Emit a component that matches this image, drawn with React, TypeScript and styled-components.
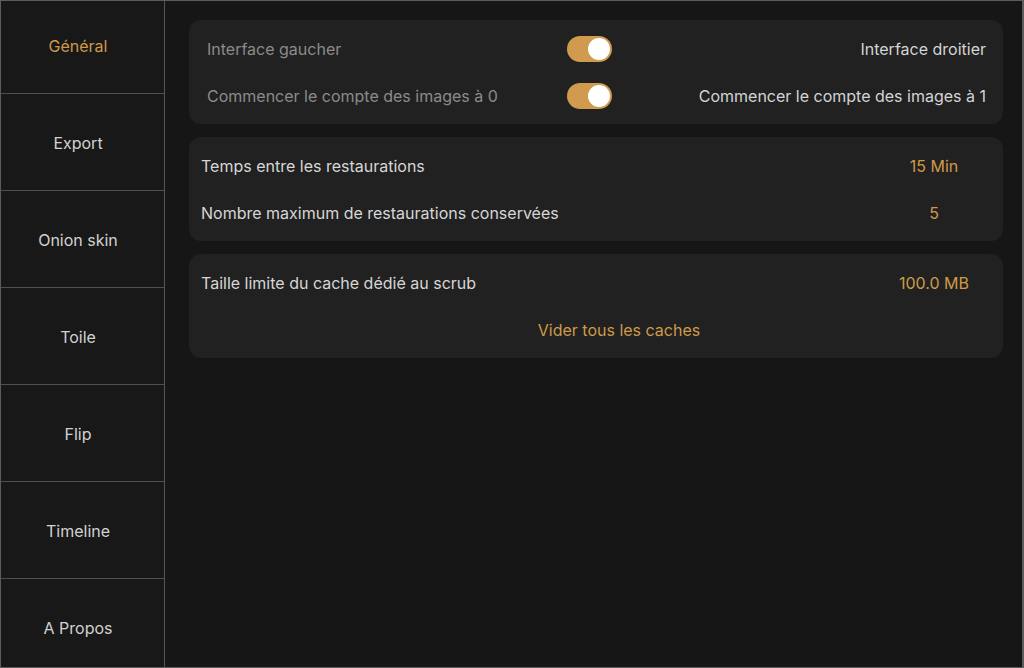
import React from "react";
import styled, { createGlobalStyle } from "styled-components";

const Global = createGlobalStyle`
  html, body { margin: 0; padding: 0; background: #161616; }
  body { font-family: Inter, "Noto Sans", "Liberation Sans", sans-serif; -webkit-font-smoothing: antialiased; }
  * { box-sizing: border-box; }
`;

const Frame = styled.div`
  width: 1024px;
  height: 668px;
  display: flex;
  border: 1px solid #5c5c5c;
  border-right-width: 2px;
  background: #161616;
  overflow: hidden;
`;

const Sidebar = styled.nav`
  width: 164px;
  flex-shrink: 0;
  background: #181818;
  border-right: 1px solid #555;
  overflow: hidden;
`;

const NavList = styled.div`
  display: flex;
  flex-direction: column;
  margin-top: -4px;
`;

const NavItem = styled.div<{ $active?: boolean }>`
  height: 97px;
  flex-shrink: 0;
  display: flex;
  align-items: center;
  justify-content: center;
  border-bottom: 1px solid #4f4f4f;
  font-size: 16px;
  color: ${(p) => (p.$active ? "#cf9a48" : "#d2d2d2")};
  padding: 2px 9px 0 0;
`;

const Content = styled.main`
  flex: 1;
  padding: 19px 19px 0 24px;
  display: flex;
  flex-direction: column;
  gap: 13px;
`;

const Card = styled.section<{ $pad: number }>`
  background: #212121;
  border-radius: 12px;
  padding: 5px 14px 5px ${(p) => p.$pad}px;
  display: flex;
  flex-direction: column;
`;

const ToggleRow = styled.div`
  height: 47px;
  display: grid;
  grid-template-columns: 360px 45px 1fr;
  align-items: center;
`;

const Dim = styled.span`
  font-size: 16px;
  color: #8b8b8b;
`;

const Bright = styled.span`
  font-size: 16px;
  color: #d4d4d4;
  text-align: right;
  padding-right: 3px;
`;

const Switch = styled.div`
  width: 45px;
  height: 26px;
  border-radius: 13px;
  background: #d09b4f;
  position: relative;
`;

const Knob = styled.div`
  position: absolute;
  top: 2px;
  right: 2px;
  width: 22px;
  height: 22px;
  border-radius: 50%;
  background: #fff;
`;

const ValueRow = styled.div`
  height: 47px;
  display: grid;
  grid-template-columns: 1fr 110px;
  align-items: center;
`;

const Label = styled.span`
  font-size: 16px;
  color: #d6d6d6;
`;

const Value = styled.span`
  font-size: 16px;
  color: #cf9a48;
  text-align: center;
`;

const ActionRow = styled.div`
  height: 47px;
  display: flex;
  align-items: center;
  justify-content: center;
  padding-left: 48px;
  font-size: 16px;
  color: #cf9a48;
`;

const nav = ["Général", "Export", "Onion skin", "Toile", "Flip", "Timeline", "A Propos"];

export default function App() {
  return (
    <>
      <Global />
      <Frame>
        <Sidebar>
          <NavList>
            {nav.map((n, i) => (
              <NavItem key={n} $active={i === 0}>
                {n}
              </NavItem>
            ))}
          </NavList>
        </Sidebar>
        <Content>
          <Card $pad={18}>
            <ToggleRow>
              <Dim>Interface gaucher</Dim>
              <Switch><Knob /></Switch>
              <Bright>Interface droitier</Bright>
            </ToggleRow>
            <ToggleRow>
              <Dim>Commencer le compte des images à 0</Dim>
              <Switch><Knob /></Switch>
              <Bright>Commencer le compte des images à 1</Bright>
            </ToggleRow>
          </Card>
          <Card $pad={12}>
            <ValueRow>
              <Label>Temps entre les restaurations</Label>
              <Value>15 Min</Value>
            </ValueRow>
            <ValueRow>
              <Label>Nombre maximum de restaurations conservées</Label>
              <Value>5</Value>
            </ValueRow>
          </Card>
          <Card $pad={12}>
            <ValueRow>
              <Label>Taille limite du cache dédié au scrub</Label>
              <Value>100.0 MB</Value>
            </ValueRow>
            <ActionRow>Vider tous les caches</ActionRow>
          </Card>
        </Content>
      </Frame>
    </>
  );
}
